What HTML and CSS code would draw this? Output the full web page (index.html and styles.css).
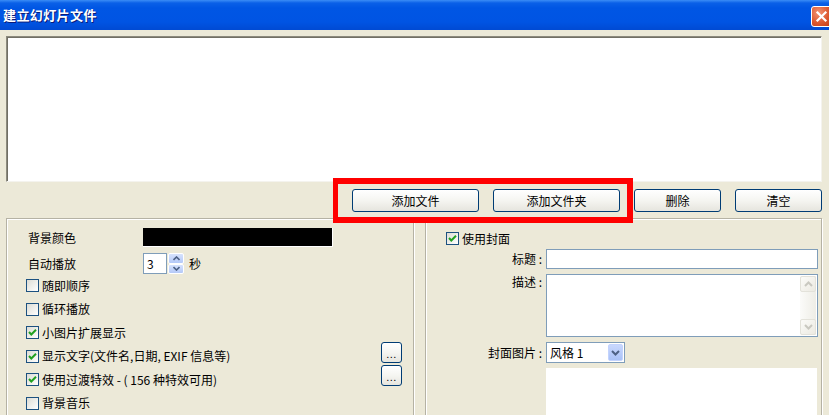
FILE: index.html
```html
<!DOCTYPE html>
<html lang="zh-CN">
<head>
    <meta charset="UTF-8">
    <meta name="viewport" content="width=device-width, initial-scale=1.0">
    <title>建立幻灯片文件</title>
    <link rel="stylesheet" href="styles.css">
</head>
<body>

<div class="window">
    <div class="titlebar">
        <span class="title">建立幻灯片文件</span>
        <span class="close-btn">
            <svg width="13" height="13" viewBox="0 0 13 13"><path d="M2.5 2.5 L10.5 10.5 M10.5 2.5 L2.5 10.5" stroke="#ffffff" stroke-width="2.2" stroke-linecap="square"/></svg>
        </span>
    </div>

    <div class="dialog">
        <!-- Lista de archivos -->
        <div class="file-list"></div>

        <div class="actions">
            <button class="btn wide">添加文件</button>
            <button class="btn wide">添加文件夹</button>
            <button class="btn narrow">删除</button>
            <button class="btn narrow">清空</button>
            <div class="mark"></div>
        </div>

        <div class="panels">
            <!-- Opciones -->
            <div class="group options">
                <div class="field-row color-row">
                    <span class="field-label">背景颜色</span>
                    <span class="swatch"></span>
                </div>
                <div class="field-row timer-row">
                    <span class="field-label">自动播放</span>
                    <span class="spin-input">3</span>
                    <span class="spin">
                        <span class="spin-btn"><svg width="7" height="5" viewBox="0 0 7 5"><path d="M0.5 4 L3.5 1 L6.5 4" fill="none" stroke="#4d6185" stroke-width="1.6"/></svg></span>
                        <span class="spin-btn"><svg width="7" height="5" viewBox="0 0 7 5"><path d="M0.5 1 L3.5 4 L6.5 1" fill="none" stroke="#4d6185" stroke-width="1.6"/></svg></span>
                    </span>
                    <span class="unit">秒</span>
                </div>

                <div class="check-row"><span class="check"></span><span>随即顺序</span></div>
                <div class="check-row"><span class="check"></span><span>循环播放</span></div>
                <div class="check-row"><span class="check on"><svg width="11" height="11" viewBox="0 0 11 11"><path d="M2 5 L4.3 7.5 L9 2.8" fill="none" stroke="#21a121" stroke-width="2"/></svg></span><span>小图片扩展显示</span></div>
                <div class="check-row"><span class="check on"><svg width="11" height="11" viewBox="0 0 11 11"><path d="M2 5 L4.3 7.5 L9 2.8" fill="none" stroke="#21a121" stroke-width="2"/></svg></span><span>显示文字(文件名,日期, EXIF 信息等)</span><button class="more">...</button></div>
                <div class="check-row"><span class="check on"><svg width="11" height="11" viewBox="0 0 11 11"><path d="M2 5 L4.3 7.5 L9 2.8" fill="none" stroke="#21a121" stroke-width="2"/></svg></span><span>使用过渡特效 - ( 156 种特效可用)</span><button class="more">...</button></div>
                <div class="check-row"><span class="check"></span><span>背景音乐</span></div>
            </div>

            <!-- Portada -->
            <div class="group cover">
                <div class="cover-check"><span class="check on"><svg width="11" height="11" viewBox="0 0 11 11"><path d="M2 5 L4.3 7.5 L9 2.8" fill="none" stroke="#21a121" stroke-width="2"/></svg></span><span>使用封面</span></div>

                <div class="form-row">
                    <span class="form-label">标题 :</span>
                    <span class="text-input"></span>
                </div>
                <div class="form-row">
                    <span class="form-label top">描述 :</span>
                    <span class="text-area">
                        <span class="scroll">
                            <span class="scroll-btn"><svg width="9" height="6" viewBox="0 0 9 6"><path d="M1 5 L4.5 1.5 L8 5" fill="none" stroke="#c9c8c0" stroke-width="2"/></svg></span>
                            <span class="scroll-track"></span>
                            <span class="scroll-btn"><svg width="9" height="6" viewBox="0 0 9 6"><path d="M1 1 L4.5 4.5 L8 1" fill="none" stroke="#c9c8c0" stroke-width="2"/></svg></span>
                        </span>
                    </span>
                </div>
                <div class="form-row">
                    <span class="form-label">封面图片 :</span>
                    <span class="select">
                        <span>风格 1</span>
                        <span class="drop-btn"><svg width="9" height="6" viewBox="0 0 9 6"><path d="M1 1 L4.5 4.5 L8 1" fill="none" stroke="#4d6185" stroke-width="2"/></svg></span>
                    </span>
                </div>
                <div class="preview"></div>
            </div>
        </div>
    </div>
</div>

</body>
</html>
```

FILE: styles.css
```css
body {
    margin: 0;
    overflow: hidden;
    background-color: #ece9d8;
    font-family: "Noto Sans CJK SC", "Liberation Sans", sans-serif;
    font-size: 12px;
    line-height: 14px;
    color: #000000;
}

.titlebar {
    height: 30px;
    display: flex;
    align-items: center;
    justify-content: space-between;
    padding-left: 3px;
    background: linear-gradient(#3b8df6 0, #0a60e7 3px, #0056e4 8px, #0054e3 22px, #004ad3 30px);
    overflow: hidden;
}

.title {
    color: #ffffff;
    font-weight: bold;
    font-size: 13px;
    letter-spacing: 0.4px;
    text-shadow: 1px 1px 0 #0a1a78;
}

.close-btn {
    width: 21px;
    height: 21px;
    box-sizing: border-box;
    margin-right: -3px;
    margin-top: 2px;
    border: 1px solid #ffffff;
    border-radius: 3px;
    background: radial-gradient(circle at 35% 30%, #f29474, #dc5830 55%, #c13b14);
    display: flex;
    align-items: center;
    justify-content: center;
}

.dialog {
    padding: 6px 7px 0 6px;
}

.file-list {
    height: 146px;
    box-sizing: border-box;
    background-color: #ffffff;
    border: 1px solid;
    border-color: #8c8a7e #f4f3ee #f4f3ee #8c8a7e;
    box-shadow: inset 1px 1px 0 #716f64;
}

.actions {
    position: relative;
    display: flex;
    justify-content: flex-end;
    gap: 14px;
    margin-top: 7px;
    height: 23px;
}

.btn {
    height: 23px;
    box-sizing: border-box;
    padding: 0;
    border: 1px solid #003c74;
    border-radius: 3px;
    background: linear-gradient(#ffffff, #f5f5f1 50%, #e6e5de);
    font-family: inherit;
    font-size: 12px;
    color: #000000;
}

.btn.wide {
    width: 127px;
}

.btn.narrow {
    width: 87px;
}

.mark {
    position: absolute;
    left: 327px;
    top: -11px;
    width: 300px;
    height: 45px;
    box-sizing: border-box;
    border: 6px solid #ff0000;
    border-left-width: 5px;
    z-index: 2;
}

.panels {
    display: flex;
    gap: 11px;
    margin-top: 6px;
    height: 210px;
}

.group {
    box-sizing: border-box;
    border: 1px solid #b5b2a4;
    box-shadow: inset 1px 1px 0 #ffffff, 1px 1px 0 #ffffff;
}

.options {
    width: 408px;
    padding-top: 9px;
}

.cover {
    flex: 1;
    padding: 13px 3px 0 20px;
}

.field-row {
    display: flex;
    align-items: center;
    padding-left: 21px;
}

.field-label {
    width: 115px;
}

.color-row {
    height: 19px;
}

.swatch {
    width: 190px;
    height: 19px;
    box-sizing: border-box;
    background-color: #000000;
    border-right: 1px solid #ffffff;
    border-bottom: 1px solid #ffffff;
}

.timer-row {
    height: 21px;
    margin-top: 6px;
}

.spin-input {
    width: 24px;
    height: 21px;
    box-sizing: border-box;
    padding-left: 3px;
    border: 1px solid #7f9db9;
    background-color: #ffffff;
    line-height: 19px;
}

.spin {
    display: flex;
    flex-direction: column;
    width: 16px;
    height: 21px;
    margin-left: 1px;
}

.spin-btn {
    flex: 1;
    display: flex;
    align-items: center;
    justify-content: center;
    border: 1px solid #ffffff;
    border-radius: 2px;
    background: linear-gradient(#d6e2fd, #b4c9f8);
}

.unit {
    margin-left: 5px;
}

.check-row {
    display: flex;
    align-items: center;
    gap: 3px;
    height: 23.5px;
    padding-left: 19px;
}

.check {
    width: 13px;
    height: 13px;
    box-sizing: border-box;
    border: 1px solid #1c5180;
    background: linear-gradient(135deg, #dcdcd5, #ffffff);
    display: flex;
    align-items: center;
    justify-content: center;
}

.more {
    align-self: flex-start;
    margin: -3px 11px 0 auto;
    width: 21px;
    height: 21px;
    box-sizing: border-box;
    padding: 4px 0 0 0;
    border: 1px solid #003c74;
    border-radius: 3px;
    background: linear-gradient(#ffffff, #f5f5f1 50%, #e6e5de);
    font-family: "Liberation Sans", sans-serif;
    font-size: 11px;
    line-height: 11px;
    letter-spacing: 0.5px;
    color: #000000;
}

.cover-check {
    display: flex;
    align-items: center;
    gap: 3px;
    height: 13px;
    margin-bottom: 4px;
}

.form-row {
    display: flex;
    align-items: center;
    margin-bottom: 5px;
}

.form-label {
    width: 96px;
    margin-right: 4px;
    text-align: right;
}

.form-label.top {
    align-self: flex-start;
    padding-top: 1px;
}

.text-input {
    flex: 1;
    height: 20px;
    box-sizing: border-box;
    border: 1px solid #7f9db9;
    background-color: #ffffff;
}

.text-area {
    flex: 1;
    height: 63px;
    box-sizing: border-box;
    display: flex;
    justify-content: flex-end;
    padding: 1px 1px 1px 0;
    border: 1px solid #7f9db9;
    background-color: #ffffff;
}

.scroll {
    width: 16px;
    display: flex;
    flex-direction: column;
    background: linear-gradient(90deg, #fbfbf9, #eeede6);
}

.scroll-btn {
    height: 16px;
    box-sizing: border-box;
    display: flex;
    align-items: center;
    justify-content: center;
    border: 1px solid #e3e2da;
    border-radius: 2px;
    background: linear-gradient(135deg, #fbfbf8, #eceae2);
}

.scroll-track {
    flex: 1;
}

.select {
    width: 79px;
    height: 21px;
    box-sizing: border-box;
    display: flex;
    align-items: center;
    justify-content: space-between;
    padding-left: 3px;
    border: 1px solid #7f9db9;
    background-color: #ffffff;
}

.drop-btn {
    width: 15px;
    height: 17px;
    margin-right: 1px;
    box-sizing: border-box;
    display: flex;
    align-items: center;
    justify-content: center;
    border: 1px solid #c3d3fd;
    border-radius: 2px;
    background: linear-gradient(#c9d8fd, #a9c1f7);
}

.preview {
    height: 60px;
    margin-left: 100px;
    margin-right: 1px;
    background-color: #ffffff;
}
```
